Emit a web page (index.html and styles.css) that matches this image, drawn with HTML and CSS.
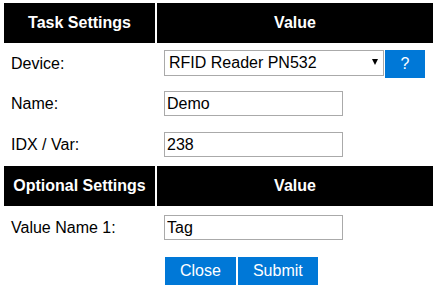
FILE: index.html
```html
<!DOCTYPE html>
<html lang="en">
<head>
    <meta charset="UTF-8">
    <meta name="viewport" content="width=device-width, initial-scale=1.0">
    <title>Task Settings</title>
    <link rel="stylesheet" href="styles.css">
</head>
<body>
    <form class="task-form">
        <table class="settings">
            <tr>
                <th class="col-label">Task Settings</th>
                <th>Value</th>
            </tr>
            <tr class="row-device">
                <td>Device:</td>
                <td>
                    <div class="device-line">
                        <span class="select-wrap">
                            <select class="device-select">
                                <option>RFID Reader PN532</option>
                            </select>
                        </span>
                        <a class="button help" href="#">?</a>
                    </div>
                </td>
            </tr>
            <tr>
                <td>Name:</td>
                <td><input class="wide" type="text" value="Demo"></td>
            </tr>
            <tr>
                <td>IDX / Var:</td>
                <td><input class="wide" type="text" value="238"></td>
            </tr>
            <tr>
                <th class="col-label">Optional Settings</th>
                <th>Value</th>
            </tr>
            <tr>
                <td>Value Name 1:</td>
                <td><input class="wide" type="text" value="Tag"></td>
            </tr>
            <tr class="row-buttons">
                <td></td>
                <td>
                    <div class="button-line">
                        <a class="button" href="#">Close</a>
                        <a class="button" href="#">Submit</a>
                    </div>
                </td>
            </tr>
        </table>
    </form>
</body>
</html>
```

FILE: styles.css
```css
body {
    font-family: "Liberation Sans", Arial, sans-serif;
    font-size: 16px;
    color: #000000;
    background-color: #ffffff;
    margin: 0;
    padding: 1px 2px;
}
.settings {
    width: 433px;
    border-collapse: separate;
    border-spacing: 2px;
}
th {
    height: 40px;
    padding: 0 4px;
    background-color: #000000;
    color: #ffffff;
    font-weight: bold;
    text-align: center;
    box-sizing: border-box;
}
.col-label {
    width: 151px;
}
td {
    padding: 4px 7px;
    vertical-align: middle;
}
.row-device td {
    height: 29px;
}
input.wide {
    width: 179px;
    height: 25px;
    margin: 3px 0;
    padding: 0 2px;
    box-sizing: border-box;
    border: 1px solid #aaaaaa;
    font-family: inherit;
    font-size: 16px;
    color: #000000;
    outline: none;
}
.device-line {
    display: flex;
    align-items: flex-start;
    gap: 1px;
}
.select-wrap {
    position: relative;
    display: inline-block;
}
.device-select {
    appearance: none;
    -webkit-appearance: none;
    width: 220px;
    height: 26px;
    padding: 0 4px;
    border: 1px solid #aaaaaa;
    border-radius: 0;
    background-color: #ffffff;
    font-family: inherit;
    font-size: 16px;
    color: #000000;
}
.select-wrap:after {
    content: "";
    position: absolute;
    left: 208px;
    top: 9px;
    border-left: 3px solid transparent;
    border-right: 3px solid transparent;
    border-top: 6px solid #000000;
    pointer-events: none;
}
.button {
    display: inline-flex;
    align-items: center;
    justify-content: center;
    height: 28px;
    padding: 0 15px;
    box-sizing: border-box;
    background-color: #0078d7;
    color: #ffffff;
    text-decoration: none;
    font-size: 16px;
}
.help {
    width: 40px;
    padding: 0;
}
.row-buttons td {
    padding-top: 8px;
}
.button-line {
    display: flex;
    gap: 2px;
    padding-left: 1px;
}
```
